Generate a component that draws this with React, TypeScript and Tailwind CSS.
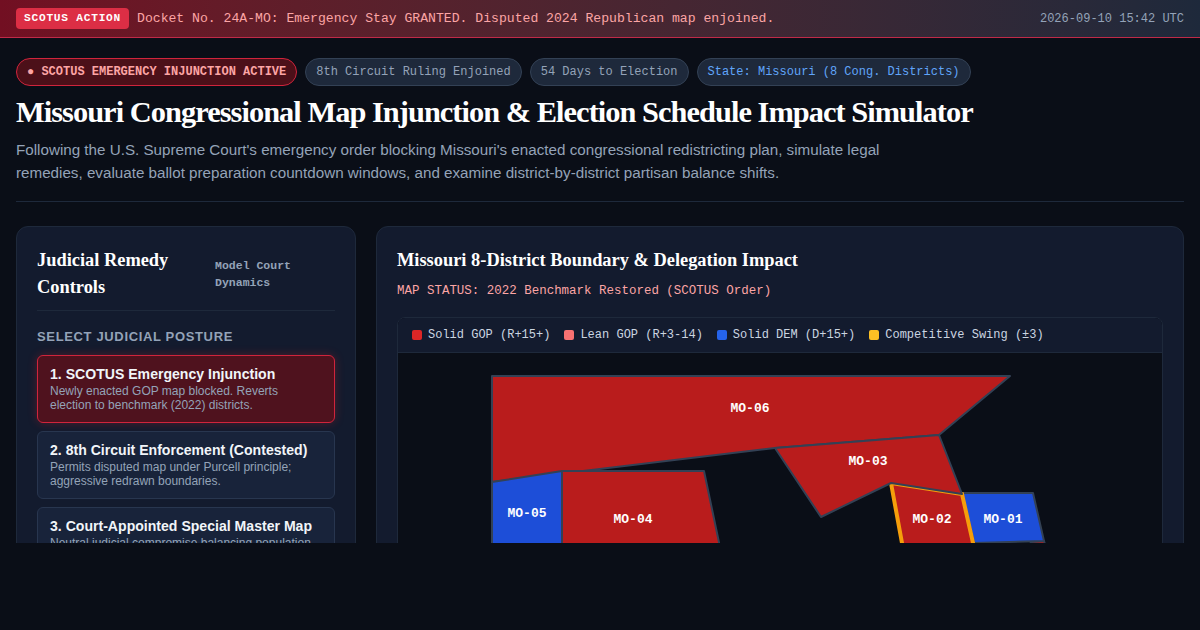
const mono = "font-['Liberation_Mono',monospace]";
const serif = "font-['Liberation_Serif',serif]";
const sans = "font-['Liberation_Sans',sans-serif]";

const postures = [
  {
    title: "1. SCOTUS Emergency Injunction",
    desc: "Newly enacted GOP map blocked. Reverts election to benchmark (2022) districts.",
    active: true,
  },
  {
    title: "2. 8th Circuit Enforcement (Contested)",
    desc: "Permits disputed map under Purcell principle; aggressive redrawn boundaries.",
    active: false,
  },
  {
    title: "3. Court-Appointed Special Master Map",
    desc: "Neutral judicial compromise balancing population equality and compactness.",
    active: false,
  },
];

const legend = [
  { label: "Solid GOP (R+15+)", color: "bg-[#dc2626]" },
  { label: "Lean GOP (R+3-14)", color: "bg-[#f87171]" },
  { label: "Solid DEM (D+15+)", color: "bg-[#2563eb]" },
  { label: "Competitive Swing (±3)", color: "bg-[#fbbf24]" },
];

function DistrictMap() {
  return (
    <svg width="764" height="260" viewBox="0 1 764 260" className="block">
      <g stroke="#334155" strokeWidth="2" strokeLinejoin="round">
        <polygon points="94,24 612,24 541,83 377,96 94,130" fill="#b91c1c" />
        <polygon points="94,130 164,119 164,262 94,262" fill="#1d4ed8" />
        <polygon points="164,119 306,119 336,262 164,262" fill="#b91c1c" />
        <polygon points="633,190 646,189 665,250 600,262" fill="#b91c1c" />
        <polygon points="564,141 635,141 646,189 576,191" fill="#1d4ed8" />
      </g>
      <polygon points="493,131 564,142 591,262 517,262" fill="#b91c1c" stroke="#f59e0b" strokeWidth="4" />
      <polygon
        points="377,96 541,83 564,142 493,131 423,165"
        fill="#b91c1c"
        stroke="#334155"
        strokeWidth="2"
        strokeLinejoin="round"
      />
      <g fill="#ffffff" fontFamily="'Liberation Mono', monospace" fontSize="13" fontWeight="700" textAnchor="middle">
        <text x="352" y="60">MO-06</text>
        <text x="470" y="113">MO-03</text>
        <text x="129" y="165">MO-05</text>
        <text x="235" y="171">MO-04</text>
        <text x="534" y="171">MO-02</text>
        <text x="605" y="171">MO-01</text>
      </g>
    </svg>
  );
}

export default function App() {
  return (
    <div className="h-[630px] bg-[#0a0e17]">
      <div className="h-[543px] overflow-hidden">
        <div className={`flex h-[38px] items-center justify-between border-b border-[#c02a48] bg-gradient-to-r from-[#720f22] to-[#1e293b] px-4 ${mono}`}>
          <div className="flex items-center gap-2">
            <span className="rounded-[4px] bg-[#dc2e45] px-2 py-[3px] text-[11.2px] font-bold leading-[15px] tracking-[0.75px] text-white">
              SCOTUS ACTION
            </span>
            <span className="text-[13.12px] text-[#fca5a5]">
              Docket No. 24A-MO: Emergency Stay GRANTED. Disputed 2024 Republican map enjoined.
            </span>
          </div>
          <span className="text-xs text-[#94a3b8]">2026-09-10 15:42 UTC</span>
        </div>

        <div className="px-4 pt-5">
          <div className="border-b border-[#1e293b] pb-[17px]">
            <div className={`flex gap-2 text-xs ${mono}`}>
              <span className="rounded-full border border-[#d0243c] bg-[#4c1019] px-[10px] py-[5px] font-bold text-[#fca5a5]">
                ● SCOTUS EMERGENCY INJUNCTION ACTIVE
              </span>
              <span className="rounded-full border border-[#334155] bg-[#1e293b] px-[10px] py-[5px] text-[#94a3b8]">
                8th Circuit Ruling Enjoined
              </span>
              <span className="rounded-full border border-[#334155] bg-[#1e293b] px-[10px] py-[5px] text-[#94a3b8]">
                54 Days to Election
              </span>
              <span className="rounded-full border border-[#334155] bg-[#1e293b] px-[10px] py-[5px] text-[#60a5fa]">
                State: Missouri (8 Cong. Districts)
              </span>
            </div>
            <h1 className={`mt-[7px] text-[30.4px] font-bold leading-[38px] tracking-[-0.96px] text-white ${serif}`}>
              Missouri Congressional Map Injunction &amp; Election Schedule Impact Simulator
            </h1>
            <p className={`mt-[7px] max-w-[900px] text-[15.2px] leading-[23px] text-[#94a3b8] ${sans}`}>
              Following the U.S. Supreme Court's emergency order blocking Missouri's enacted congressional redistricting plan, simulate legal remedies, evaluate ballot preparation countdown windows, and examine district-by-district partisan balance shifts.
            </p>
          </div>

          <div className="mt-6 flex gap-5">
            <div className="w-[340px] shrink-0 rounded-xl border border-[#1e293b] bg-[#131b2e] px-5 pt-5">
              <div className="flex items-center justify-between border-b border-[#1e293b] pb-[9px]">
                <h2 className={`w-[150px] text-[18.4px] font-bold leading-[27px] text-white ${serif}`}>
                  Judicial Remedy Controls
                </h2>
                <span className={`mr-[15px] w-[105px] text-[11.52px] font-bold leading-[17px] text-[#94a3b8] ${mono}`}>
                  Model Court Dynamics
                </span>
              </div>
              <div className={`mt-[18px] text-[13px] font-bold leading-[16px] tracking-[0.65px] text-[#94a3b8] ${sans}`}>
                SELECT JUDICIAL POSTURE
              </div>
              <div className={`mt-[10px] flex flex-col gap-2 ${sans}`}>
                {postures.map((p) => (
                  <div
                    key={p.title}
                    className={`rounded-md border px-3 py-[10px] ${
                      p.active
                        ? "border-[#d0243c] bg-[#4f121e] shadow-[0_0_10px_rgba(220,38,38,0.3)]"
                        : "border-[#28364f] bg-[#18233a]"
                    }`}
                  >
                    <div className="text-[14.08px] font-bold leading-[17px] text-[#f1f5f9]">{p.title}</div>
                    <div className="mt-px text-xs leading-[14px] text-[#94a3b8]">{p.desc}</div>
                  </div>
                ))}
              </div>
            </div>

            <div className="min-w-0 flex-1 rounded-xl border border-[#1e293b] bg-[#131b2e] px-5 pt-5">
              <h2 className={`text-[18.4px] font-bold leading-[27px] text-white ${serif}`}>
                Missouri 8-District Boundary &amp; Delegation Impact
              </h2>
              <div className={`mt-2 text-[12.48px] leading-[18px] text-[#fca5a5] ${mono}`}>
                MAP STATUS: 2022 Benchmark Restored (SCOTUS Order)
              </div>
              <div className="mt-[17px] overflow-hidden rounded-lg border border-[#1e293b] bg-[#0a0e17]">
                <div className={`flex h-[35px] items-center gap-[14px] border-b border-[#1e293b] bg-[#131b2e] px-[14px] text-xs text-[#cbd5e1] ${mono}`}>
                  {legend.map((l) => (
                    <span key={l.label} className="flex items-center gap-[6px]">
                      <span className={`h-[10px] w-[10px] rounded-[2px] ${l.color}`} />
                      {l.label}
                    </span>
                  ))}
                </div>
                <DistrictMap />
              </div>
            </div>
          </div>
        </div>
      </div>
    </div>
  );
}
